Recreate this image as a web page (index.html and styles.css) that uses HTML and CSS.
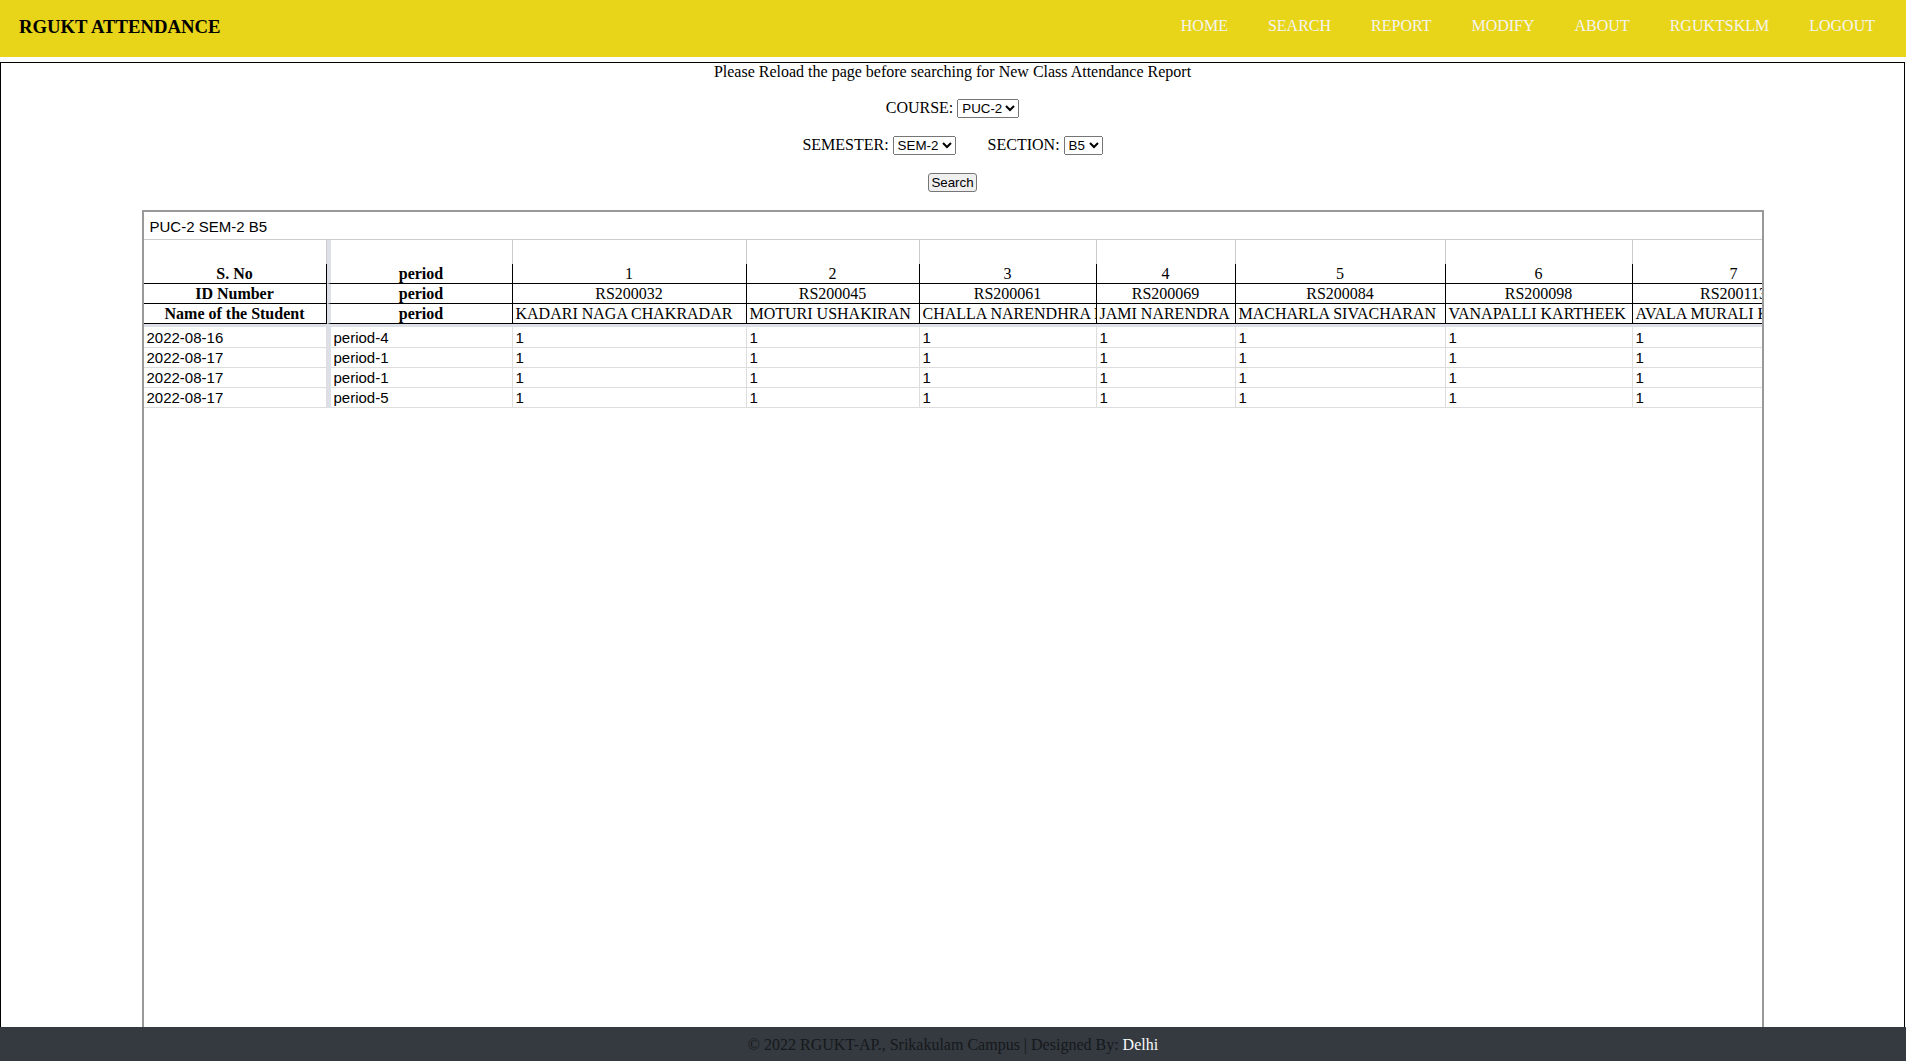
FILE: index.html
```html
<!DOCTYPE html>
<html lang="en">
<head>
<meta charset="utf-8">
<title>RGUKT Attendance</title>
<link rel="stylesheet" href="styles.css">
</head>
<body>
<nav class="topbar">
  <div class="brand">RGUKT ATTENDANCE</div>
  <ul class="menu">
    <li><a href="#">HOME</a></li>
    <li><a href="#">SEARCH</a></li>
    <li><a href="#">REPORT</a></li>
    <li><a href="#">MODIFY</a></li>
    <li><a href="#">ABOUT</a></li>
    <li><a href="#">RGUKTSKLM</a></li>
    <li><a href="#">LOGOUT</a></li>
  </ul>
</nav>
<main class="page">
  <p class="note">Please Reload the page before searching for New Class Attendance Report</p>
  <div class="row row-course">
    <label>COURSE: <select><option>PUC-2</option></select></label>
  </div>
  <div class="row row-sem">
    <label>SEMESTER: <select><option>SEM-2</option></select></label>
    <label class="section">SECTION: <select><option>B5</option></select></label>
  </div>
  <div class="row row-btn">
    <button type="button">Search</button>
  </div>
  <section class="report">
    <div class="report-title">PUC-2 SEM-2 B5</div>
    <div class="table-wrap">
      <table class="att">
        <thead>
          <tr class="spacer">
            <th class="w-sno"></th>
            <th class="w-per p"></th>
            <th class="w-c1"></th>
            <th class="w-c2"></th>
            <th class="w-c3"></th>
            <th class="w-c4"></th>
            <th class="w-c5"></th>
            <th class="w-c6"></th>
            <th class="w-c7"></th>
          </tr>
          <tr class="hr">
            <th class="b">S. No</th>
            <th class="b p">period</th>
            <th>1</th><th>2</th><th>3</th><th>4</th><th>5</th><th>6</th><th>7</th>
          </tr>
          <tr class="hr">
            <th class="b">ID Number</th>
            <th class="b p">period</th>
            <th>RS200032</th><th>RS200045</th><th>RS200061</th><th>RS200069</th><th>RS200084</th><th>RS200098</th><th>RS200113</th>
          </tr>
          <tr class="hr names">
            <th class="b c">Name of the Student</th>
            <th class="b c p">period</th>
            <th>KADARI NAGA CHAKRADAR</th>
            <th>MOTURI USHAKIRAN</th>
            <th>CHALLA NARENDHRA REDDY</th>
            <th>JAMI NARENDRA</th>
            <th>MACHARLA SIVACHARAN</th>
            <th>VANAPALLI KARTHEEK</th>
            <th>AVALA MURALI KRISHNA</th>
          </tr>
        </thead>
        <tbody>
          <tr><td>2022-08-16</td><td class="p">period-4</td><td>1</td><td>1</td><td>1</td><td>1</td><td>1</td><td>1</td><td>1</td></tr>
          <tr><td>2022-08-17</td><td class="p">period-1</td><td>1</td><td>1</td><td>1</td><td>1</td><td>1</td><td>1</td><td>1</td></tr>
          <tr><td>2022-08-17</td><td class="p">period-1</td><td>1</td><td>1</td><td>1</td><td>1</td><td>1</td><td>1</td><td>1</td></tr>
          <tr><td>2022-08-17</td><td class="p">period-5</td><td>1</td><td>1</td><td>1</td><td>1</td><td>1</td><td>1</td><td>1</td></tr>
        </tbody>
      </table>
    </div>
  </section>
</main>
<footer class="footer">© 2022 RGUKT-AP., Srikakulam Campus | Designed By: <a href="#">Delhi</a></footer>
</body>
</html>
```

FILE: styles.css
```css
html, body {
  margin: 0;
  padding: 0;
}
body {
  font-family: "Liberation Serif", "Times New Roman", serif;
  font-size: 16px;
  color: #000;
  background: #fff;
  overflow: hidden;
}

/* top bar */
.topbar {
  height: 57px;
  background: #e8d418;
  display: flex;
  align-items: center;
  justify-content: space-between;
  margin-bottom: 5px;
}
.brand {
  margin-left: 19px;
  font-weight: bold;
  font-size: 18.72px;
  padding-bottom: 3px;
}
.menu {
  display: flex;
  list-style: none;
  margin: 0;
  padding: 0 11px 6px 0;
}
.menu a {
  display: block;
  padding: 0 20px;
  color: #f4f4f2;
  text-decoration: none;
}

/* main box */
.page {
  border: 1px solid #000;
  margin-right: 1px;
  height: calc(100vh - 62px);
  box-sizing: border-box;
  display: flex;
  flex-direction: column;
  align-items: center;
}
.note {
  margin: 0;
  line-height: 18px;
}
.row {
  display: flex;
  align-items: center;
  height: 22px;
}
.row-course { margin-top: 16px; }
.row-sem { margin-top: 15px; }
.row-btn { margin-top: 15px; }
.section { margin-left: 32px; }

select {
  font-family: "Liberation Sans", Arial, sans-serif;
  font-size: 13.333px;
}
button {
  font-family: "Liberation Sans", Arial, sans-serif;
  font-size: 13.333px;
  height: 19px;
  padding: 0 2px;
  border: 1px solid #767676;
  border-radius: 3px;
  background: #efefef;
  color: #000;
}

/* report panel */
.report {
  width: 1622px;
  box-sizing: border-box;
  border: 2px solid #999;
  margin-top: 17px;
  flex: 1;
  min-height: 0;
  overflow: hidden;
  display: flex;
  flex-direction: column;
}
.report-title {
  font-family: "Liberation Sans", Arial, sans-serif;
  font-size: 15px;
  height: 28px;
  box-sizing: border-box;
  padding: 2px 0 0 6px;
  line-height: 25px;
  border-bottom: 1px solid #ccc;
}
.table-wrap {
  overflow: hidden;
}

.att {
  border-collapse: separate;
  border-spacing: 0;
  table-layout: fixed;
  width: 1692px;
}
.att th, .att td {
  box-sizing: border-box;
  padding: 0 3px;
  white-space: nowrap;
  overflow: hidden;
  text-overflow: clip;
}
.w-sno { width: 183px; }
.w-per { width: 186px; }
.w-c1 { width: 234px; }
.w-c2 { width: 173px; }
.w-c3 { width: 177px; }
.w-c4 { width: 139px; }
.w-c5 { width: 210px; }
.w-c6 { width: 187px; }
.w-c7 { width: 203px; }

.spacer th {
  height: 24px;
  padding: 0;
  border-right: 1px solid #ccc;
}
.hr th {
  font-weight: normal;
  text-align: center;
  line-height: 19px;
  border-right: 1px solid #000;
  border-bottom: 1px solid #000;
}
.hr th.b { font-weight: bold; }
.names th { text-align: left; }
.names th.c { text-align: center; }

.att .p { border-left: 4px solid #dde0e6; }

.att td {
  font-family: "Liberation Sans", Arial, sans-serif;
  font-size: 15px;
  line-height: 18px;
  padding-top: 1px;
  text-align: left;
  border-right: 1px solid #ddd;
  border-bottom: 1px solid #ddd;
}
.att tbody tr:first-child td {
  border-top: 3px solid #dde0e6;
  padding-top: 2px;
}

/* footer */
.footer {
  position: fixed;
  left: 0;
  right: 0;
  bottom: 0;
  height: 34px;
  box-sizing: border-box;
  padding-top: 2px;
  line-height: 32px;
  background: #343a40;
  color: #16181b;
  text-align: center;
}
.footer a {
  color: #f8f9fa;
  text-decoration: none;
}
```
